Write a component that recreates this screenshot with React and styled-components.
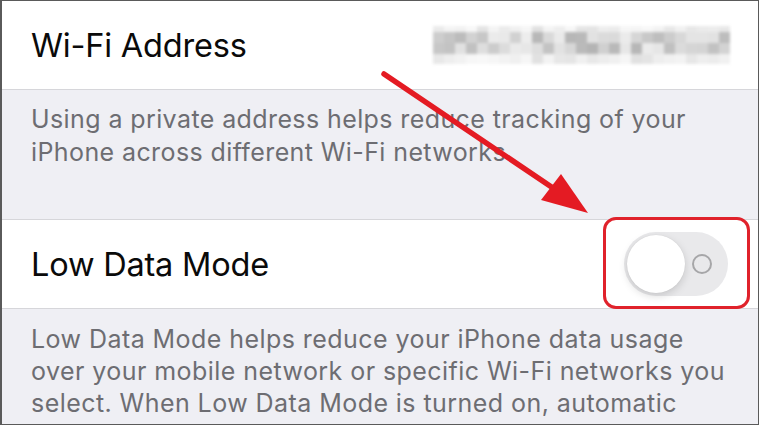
import styled, { createGlobalStyle } from "styled-components";

const GlobalStyle = createGlobalStyle`
  html, body {
    margin: 0;
    padding: 0;
    background: #efeff4;
  }
  * { box-sizing: border-box; }
`;

// deterministic noise for the pixelated address
function seeded(n) {
  const x = Math.sin(n * 91.7 + 13.3) * 43758.5453;
  return x - Math.floor(x);
}

const COLS = 27;
const ROWS = 4;
const CELL = 11;

function BlurredAddress() {
  const cells = [];
  for (let r = 0; r < ROWS; r++) {
    for (let c = 0; c < COLS; c++) {
      const inner = r === 1 || r === 2;
      const gap = c === 8 || c === 17;
      const v = seeded(r * 100 + c);
      let g;
      if (gap) g = inner ? 228 + v * 15 : 246;
      else if (inner) g = 180 + v * 55;
      else g = 225 + v * 24;
      g = Math.round(g);
      cells.push(
        <rect key={r + "-" + c} x={c * CELL} y={r * CELL - 5} width={CELL} height={CELL}
          fill={`rgb(${g},${g},${g})`} />
      );
    }
  }
  return (
    <Pixelated width={COLS * CELL} height={ROWS * CELL - 6} viewBox={`0 0 ${COLS * CELL} ${ROWS * CELL - 6}`}>
      {cells}
    </Pixelated>
  );
}

export default function App() {
  return (
    <>
      <GlobalStyle />
      <Frame>
        <Row>
          <Label>Wi-Fi Address</Label>
          <BlurredAddress />
        </Row>
        <Footer $top={13} $height={130} $spacing={0.4}>
          Using a private address helps reduce tracking of your iPhone across different Wi-Fi networks
        </Footer>
        <Row>
          <Label>Low Data Mode</Label>
          <Highlight>
            <Toggle>
              <Knob />
              <OffMark />
            </Toggle>
          </Highlight>
        </Row>
        <Footer $top={14} $spacing={0.44} $lineHeight={32}>
          Low Data Mode helps reduce your iPhone data usage over your mobile network or specific Wi-Fi networks you select. When Low Data Mode is turned on, automatic
        </Footer>
        <Arrow viewBox="0 0 759 425" width="759" height="425">
          <line x1="384" y1="74" x2="553" y2="188" stroke="#e41b23" strokeWidth="5.5" strokeLinecap="round" />
          <polygon points="588,213 541,200 561,174" fill="#e41b23" />
        </Arrow>
      </Frame>
    </>
  );
}

const Frame = styled.div`
  position: relative;
  width: 759px;
  height: 425px;
  overflow: hidden;
  background: #efeff4;
  border: 1px solid #5a5a5a;
  border-left-width: 2px;
  font-family: Inter, "Liberation Sans", sans-serif;
`;

const Row = styled.div`
  display: flex;
  align-items: center;
  justify-content: space-between;
  height: 89px;
  padding: 0 30px 0 29px;
  background: #ffffff;
  border-bottom: 1px solid #d6d6da;
`;

const Label = styled.span`
  font-size: 32.5px;
  color: #0a0a0a;
  letter-spacing: -0.2px;
`;

const Pixelated = styled.svg`
  display: block;
  filter: blur(1.6px);
  margin-right: -2px;
`;

const Footer = styled.p`
  margin: 0;
  height: ${(p) => (p.$height ? p.$height + "px" : "auto")};
  padding: ${(p) => p.$top}px 26px 0 29px;
  color: #6d6d72;
  font-size: 25px;
  line-height: ${(p) => p.$lineHeight || 33}px;
  letter-spacing: ${(p) => p.$spacing}px;
  border-bottom: ${(p) => (p.$height ? "1px solid #d6d6da" : "none")};
`;

const Highlight = styled.div`
  position: relative;
  &::after {
    content: "";
    position: absolute;
    top: -15px;
    bottom: -13px;
    left: -21px;
    right: -22px;
    border: 3px solid #e0222b;
    border-radius: 13px;
    pointer-events: none;
  }
`;

const Toggle = styled.div`
  position: relative;
  display: flex;
  align-items: center;
  width: 104px;
  height: 64px;
  padding: 3px;
  border-radius: 32px;
  background: #e9e9eb;
`;

const Knob = styled.div`
  width: 58px;
  height: 58px;
  border-radius: 50%;
  background: #ffffff;
  box-shadow: 0 3px 8px rgba(0, 0, 0, 0.15), 0 0 1px rgba(0, 0, 0, 0.12);
`;

const OffMark = styled.div`
  position: absolute;
  right: 16px;
  top: 50%;
  width: 20px;
  height: 20px;
  margin-top: -10px;
  border-radius: 50%;
  border: 2px solid #a6a6a8;
`;

const Arrow = styled.svg`
  position: absolute;
  left: -2px;
  top: -1px;
  pointer-events: none;
`;
